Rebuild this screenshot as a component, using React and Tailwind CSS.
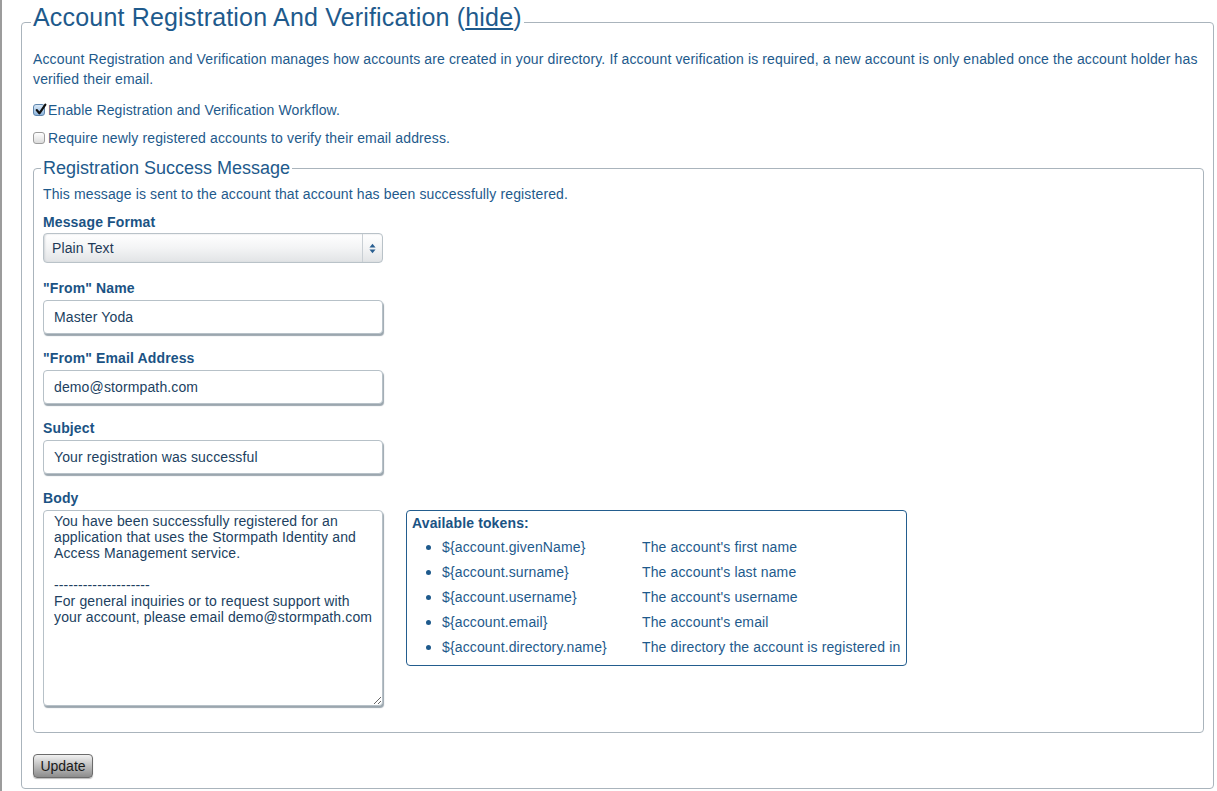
import React from "react";

const tokens = [
  ["${account.givenName}", "The account's first name"],
  ["${account.surname}", "The account's last name"],
  ["${account.username}", "The account's username"],
  ["${account.email}", "The account's email"],
  ["${account.directory.name}", "The directory the account is registered in"],
];

const bodyText =
  "You have been successfully registered for an\napplication that uses the Stormpath Identity and\nAccess Management service.\n\n--------------------\nFor general inquiries or to request support with\nyour account, please email demo@stormpath.com";

function Checkbox({ checked }) {
  if (checked) {
    return (
      <span className="relative w-[12px] h-[12px] rounded-[3px] border border-[#5f86ad] bg-linear-to-b from-[#d8e8f7] to-[#8fb6dd] shrink-0">
        <svg viewBox="0 0 12 12" className="absolute -top-[2px] left-0 w-[13px] h-[13px]">
          <path d="M2.5 6.5 L5 9.5 L10.5 1.5" fill="none" stroke="#111" strokeWidth="2" strokeLinecap="round" strokeLinejoin="round" />
        </svg>
      </span>
    );
  }
  return (
    <span className="w-[12px] h-[12px] rounded-[3px] border border-[#9d9d9d] bg-linear-to-b from-white to-[#dcdcdc] shrink-0" />
  );
}

function Label({ children }) {
  return <div className="font-bold leading-[18px] text-[#1b5384]">{children}</div>;
}

function TextInput({ value }) {
  return (
    <div className="mt-[3px] h-[34px] w-[340px] rounded-[4px] border border-[#b7c1c8] bg-white shadow-[1px_2px_1px_#9ba6ae] flex items-center px-[10px] text-[#213f5f]">
      {value}
    </div>
  );
}

export default function App() {
  return (
    <div className="min-h-[791px] bg-white border-l-2 border-[#9c9c9c] pl-[19px] pr-[3px] font-['Liberation_Sans',Arial,sans-serif] text-[14px] tracking-[0.13px] text-[#1e5a8c]">
      <fieldset className="border border-[#aab4bc] rounded-[4px] pl-[11px] pr-[9px] pb-[10px]">
        <legend className="-ml-[2px] px-[2px] text-[25px] tracking-[0.18px] leading-[34px] pb-[10px]">
          Account Registration And Verification (<a href="#" className="underline">hide</a>)
        </legend>

        <p className="mt-[5px] leading-[20px]">
          Account Registration and Verification manages how accounts are created in your directory. If account verification is required, a new account is only enabled once the account holder has verified their email.
        </p>

        <div className="mt-[7px] h-[28px] flex items-center gap-[3px]">
          <Checkbox checked />
          <span>Enable Registration and Verification Workflow.</span>
        </div>
        <div className="h-[28px] flex items-center gap-[3px]">
          <Checkbox />
          <span>Require newly registered accounts to verify their email address.</span>
        </div>

        <fieldset className="mt-[6px] border border-[#aab4bc] rounded-[4px] pl-[9px] pr-[9px] pb-[26px]">
          <legend className="-ml-[2px] px-[2px] text-[18px] tracking-normal leading-[21px]">Registration Success Message</legend>

          <p className="mt-[6px] leading-[18px]">
            This message is sent to the account that account has been successfully registered.
          </p>

          <div className="mt-[10px]">
            <Label>Message Format</Label>
            <div className="mt-[2px] h-[30px] w-[340px] rounded-[4px] border border-[#b9c2c8] bg-linear-to-b from-white via-[#f3f4f5] to-[#e2e4e6] shadow-[inset_1px_0_2px_#d0d4d8] flex items-stretch text-[#1f3a57]">
              <div className="flex-1 flex items-center pl-[8px]">Plain Text</div>
              <div className="w-[20px] border-l border-[#c9cfd4] flex items-center justify-center">
                <svg viewBox="0 0 8 12" className="w-[7px] h-[11px]">
                  <path d="M4 0.5 L7.5 4.8 L0.5 4.8 Z" fill="#2a5f90" />
                  <path d="M4 11.5 L7.5 7.2 L0.5 7.2 Z" fill="#2a5f90" />
                </svg>
              </div>
            </div>
          </div>

          <div className="mt-[16px]">
            <Label>"From" Name</Label>
            <TextInput value="Master Yoda" />
          </div>

          <div className="mt-[15px]">
            <Label>"From" Email Address</Label>
            <TextInput value="demo@stormpath.com" />
          </div>

          <div className="mt-[15px]">
            <Label>Subject</Label>
            <TextInput value="Your registration was successful" />
          </div>

          <div className="mt-[15px]">
            <Label>Body</Label>
            <div className="mt-[3px] flex items-start">
              <textarea
                defaultValue={bodyText}
                className="block w-[340px] h-[196px] rounded-[4px] border border-[#b7c1c8] bg-white shadow-[1px_2px_1px_#9ba6ae] pl-[10px] pr-[4px] pt-[2px] leading-[16px] text-[#213f5f] outline-none"
              />
              <div className="ml-[23px] w-[501px] rounded-[4px] border border-[#235d8e] pl-[5px] pt-[3px] pb-[5px]">
                <div className="font-bold leading-[18px] text-[#1b5384]">Available tokens:</div>
                <ul className="mt-[3px]">
                  {tokens.map(([token, desc]) => (
                    <li key={token} className="h-[25px] flex items-center pl-[14px]">
                      <span className="w-[5px] h-[5px] rounded-full bg-[#1e5a8c] shrink-0" />
                      <span className="ml-[11px] w-[200px]">{token}</span>
                      <span>{desc}</span>
                    </li>
                  ))}
                </ul>
              </div>
            </div>
          </div>
        </fieldset>

        <button className="mt-[21px] block h-[24px] w-[60px] rounded-[4px] border border-[#6c6c6c] bg-linear-to-b from-[#f2f2f2] to-[#8c8c8c] text-[14px] tracking-normal text-[#1a1a1a] shadow-[0_1px_1px_#bbb]">
          Update
        </button>
      </fieldset>
    </div>
  );
}
